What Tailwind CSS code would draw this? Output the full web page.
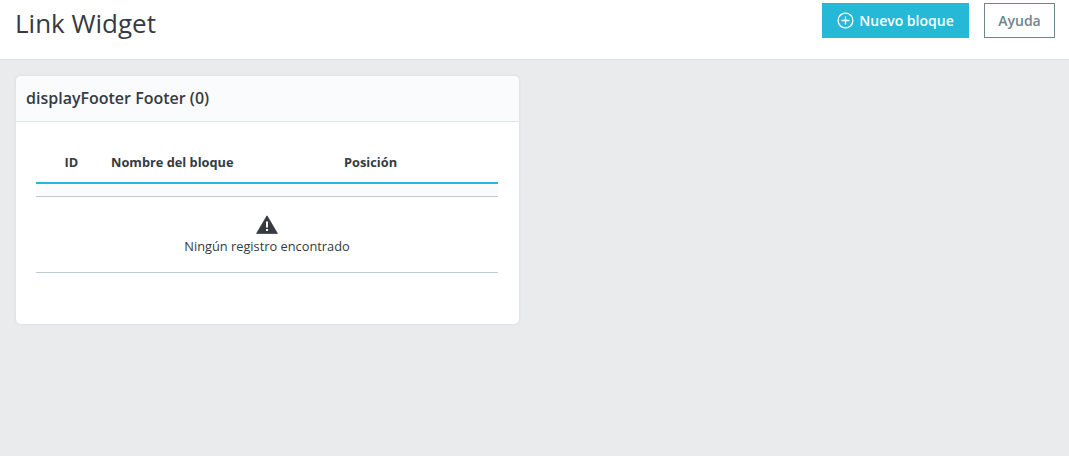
<!DOCTYPE html>
<html><head><meta charset="utf-8"><script src="https://cdn.jsdelivr.net/npm/@tailwindcss/browser@4"></script></head>
<body class="m-0 bg-[#eaebec] font-['Open_Sans',sans-serif] text-[#363a41] h-[456px] overflow-hidden">
<header class="h-[60px] bg-white border-b border-[#dfe1e3] flex items-start justify-between pl-[15px] pr-[14px]">
  <h1 class="text-[26px] leading-[34px] mt-[6px] font-normal text-[#363a41]">Link Widget</h1>
  <div class="flex items-start gap-[15px] mt-[3px]">
    <a class="h-[35px] w-[147px] bg-[#25b9d7] text-white text-[14px] font-semibold flex items-center justify-center gap-[5px]">
      <svg width="17" height="17" viewBox="0 0 17 17" fill="none" stroke="white" stroke-width="1.3"><circle cx="8.5" cy="8.5" r="7.4"/><path d="M8.5 4.5v8M4.5 8.5h8"/></svg>
      Nuevo bloque</a>
    <a class="h-[35px] w-[71px] bg-white border border-[#6c868e] text-[#6c868e] text-[14px] font-semibold flex items-center justify-center">Ayuda</a>
  </div>
</header>
<main class="pt-4 pl-4">
  <section class="w-[503px] h-[248px] bg-white rounded-[5px] shadow-[0_0_3px_0_rgba(150,180,185,0.3)] overflow-hidden">
    <div class="h-[46px] bg-[#fafbfc] border-b border-[#dbe6e9] pl-[10px] pb-[1px] flex items-center text-[16px] font-semibold leading-none">displayFooter Footer (0)</div>
    <div class="pl-5 pr-[21px] pt-[19px]">
      <div class="h-[43px] border-b-2 border-[#25b9d7] flex items-end text-[12.8px] font-bold pb-[11px] leading-[17px]">
        <span class="w-[75px] pl-[28.5px]">ID</span>
        <span class="w-[233px]">Nombre del bloque</span>
        <span>Posición</span>
      </div>
      <div class="h-[13px] bg-[#fafbfc] border-b border-[#bbcdd2]"></div>
      <div class="h-[76px] border-b border-[#bbcdd2] flex flex-col items-center">
        <svg class="mt-[18px]" width="22" height="19" viewBox="0 0 22 19"><path fill="#363a41" stroke="#363a41" stroke-width="0.8" stroke-linejoin="round" d="M11 0.8 L21.4 18.4 H0.6 Z"/><rect x="10" y="6.5" width="2" height="6" fill="#fff"/><rect x="10" y="14" width="2" height="2" fill="#fff"/></svg>
        <p class="text-[12.8px] leading-[18px] mt-[3px]">Ningún registro encontrado</p>
      </div>
    </div>
  </section>
</main>
</body></html>
